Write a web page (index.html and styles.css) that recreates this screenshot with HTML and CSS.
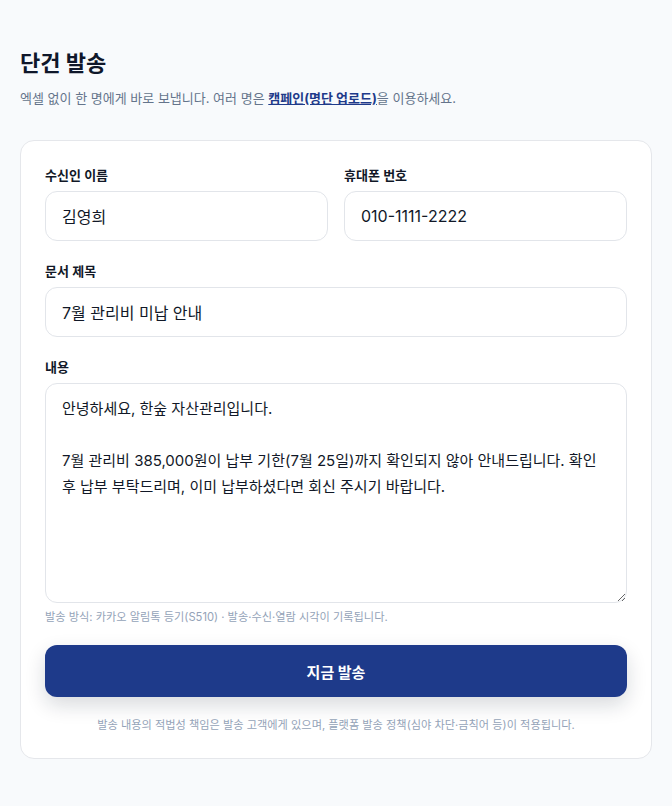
FILE: index.html
```html
<!DOCTYPE html>
<html lang="ko">
<head>
<meta charset="utf-8">
<title>단건 발송</title>
<link rel="stylesheet" href="styles.css">
</head>
<body>
<main class="page">
  <h1 class="title">단건 발송</h1>
  <p class="subtitle">엑셀 없이 한 명에게 바로 보냅니다. 여러 명은 <a class="link" href="#">캠페인(명단 업로드)</a>을 이용하세요.</p>
  <form class="card">
    <div class="row">
      <div class="field">
        <label class="label">수신인 이름</label>
        <input class="input" type="text" value="김영희">
      </div>
      <div class="field">
        <label class="label">휴대폰 번호</label>
        <input class="input" type="text" value="010-1111-2222">
      </div>
    </div>
    <div class="field">
      <label class="label">문서 제목</label>
      <input class="input" type="text" value="7월 관리비 미납 안내">
    </div>
    <div class="field">
      <label class="label">내용</label>
      <textarea class="textarea">안녕하세요, 한숲 자산관리입니다.

7월 관리비 385,000원이 납부 기한(7월 25일)까지 확인되지 않아 안내드립니다. 확인 후 납부 부탁드리며, 이미 납부하셨다면 회신 주시기 바랍니다.</textarea>
      <p class="hint">발송 방식: 카카오 알림톡 등기(S510) · 발송·수신·열람 시각이 기록됩니다.</p>
    </div>
    <button class="button" type="button">지금 발송</button>
    <p class="note">발송 내용의 적법성 책임은 발송 고객에게 있으며, 플랫폼 발송 정책(심야 차단·금칙어 등)이 적용됩니다.</p>
  </form>
</main>
</body>
</html>
```
FILE: styles.css
```css
* { box-sizing: border-box; }
html, body {
  margin: 0;
  background: #f8fafc;
  font-family: Inter, "Noto Sans CJK KR", sans-serif;
  color: #0f172a;
}
.page {
  padding: 48px 20px 40px;
  width: 672px;
}
.title {
  margin: 0;
  font-size: 22px;
  line-height: 30px;
  font-weight: 700;
  color: #0f172a;
}
.subtitle {
  margin: 10px 0 32px;
  font-size: 13px;
  line-height: 20px;
  color: #64748b;
}
.link {
  color: #1e3a8a;
  font-weight: 700;
  text-decoration: underline;
}
.card {
  background: #fff;
  border: 1px solid #e5e7eb;
  border-radius: 14px;
  padding: 25px 24px 25px;
  display: flex;
  flex-direction: column;
  gap: 21px;
}
.row {
  display: grid;
  grid-template-columns: 1fr 1fr;
  gap: 16px;
}
.field {
  display: flex;
  flex-direction: column;
}
.label {
  font-size: 13px;
  line-height: 18px;
  font-weight: 600;
  color: #111827;
  margin-bottom: 7px;
}
.input, .textarea {
  font-family: Inter, "Noto Sans CJK KR", sans-serif;
  color: #111827;
  border: 1px solid #e2e5ea;
  border-radius: 12px;
  background: #fff;
  outline: none;
}
.input {
  font-size: 16px;
  height: 50px;
  padding: 0 16px;
  width: 100%;
}
.textarea {
  font-size: 15px;
  height: 220px;
  padding: 12px 16px;
  line-height: 26px;
  resize: vertical;
  width: 100%;
}
.hint {
  margin: 6px 0 0;
  font-size: 11.2px;
  line-height: 16px;
  color: #94a3b8;
}
.button {
  margin-top: -1px;
  height: 52px;
  border: none;
  border-radius: 12px;
  background: #1e3a8a;
  color: #fff;
  font-family: Inter, "Noto Sans CJK KR", sans-serif;
  font-size: 15px;
  font-weight: 700;
  box-shadow: 0 8px 20px rgba(15, 23, 42, 0.16);
}
.note {
  margin: -1px 0 0;
  text-align: center;
  font-size: 11.2px;
  line-height: 16px;
  color: #94a3b8;
}
```
